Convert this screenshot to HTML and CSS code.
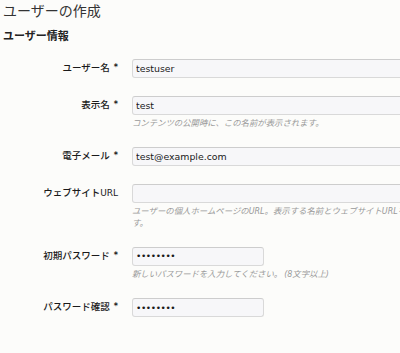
FILE: index.html
```html
<!DOCTYPE html>
<html lang="ja">
<head>
<meta charset="utf-8">
<title>ユーザーの作成</title>
<link rel="stylesheet" href="styles.css">
</head>
<body>
<div class="page">
  <h1 class="title">ユーザーの作成</h1>
  <h3 class="section">ユーザー情報</h3>
  <div class="form">
    <div class="row">
      <div class="label">ユーザー名<span class="req">*</span></div>
      <div class="field"><input class="input wide" type="text" value="testuser"></div>
    </div>
    <div class="row">
      <div class="label">表示名<span class="req">*</span></div>
      <div class="field">
        <input class="input wide" type="text" value="test">
        <p class="hint">コンテンツの公開時に、この名前が表示されます。</p>
      </div>
    </div>
    <div class="row">
      <div class="label">電子メール<span class="req">*</span></div>
      <div class="field"><input class="input wide" type="text" value="test@example.com"></div>
    </div>
    <div class="row">
      <div class="label">ウェブサイト<span class="lat">URL</span></div>
      <div class="field">
        <input class="input wide" type="text" value="">
        <p class="hint">ユーザーの個人ホームページの<span class="lat">URL</span>。表示する名前とウェブサイト<span class="lat">URL</span>を表示しま<br>す。</p>
      </div>
    </div>
    <div class="row">
      <div class="label">初期パスワード<span class="req">*</span></div>
      <div class="field">
        <input class="input short" type="password" value="testpass">
        <p class="hint">新しいパスワードを入力してください。 <span class="lat">(8</span>文字以上<span class="lat">)</span></p>
      </div>
    </div>
    <div class="row">
      <div class="label">パスワード確認<span class="req">*</span></div>
      <div class="field"><input class="input short" type="password" value="testpass"></div>
    </div>
  </div>
</div>
</body>
</html>
```
FILE: styles.css
```css
html, body {
  margin: 0;
  padding: 0;
  background: #fcfcfa;
}
body {
  width: 400px;
  height: 353px;
  overflow: hidden;
  font-family: "DejaVu Sans", "Noto Sans CJK JP", sans-serif;
  color: #222;
}
.page {
  padding-left: 3px;
}
.title {
  margin: 0;
  font-family: "Noto Sans CJK JP", sans-serif;
  font-size: 14px;
  font-weight: 400;
  line-height: 20px;
  color: #333;
}
.section {
  margin: 8px 0 8px;
  font-family: "Noto Sans CJK JP", sans-serif;
  font-size: 11px;
  font-weight: 700;
  line-height: 14px;
  color: #222;
}
.form {
  display: flex;
  flex-direction: column;
}
.row {
  display: grid;
  grid-template-columns: 115px 1fr;
  column-gap: 14px;
  padding: 9px 0;
}
.label {
  text-align: right;
  font-family: "Noto Sans CJK JP", sans-serif;
  font-size: 9.5px;
  font-weight: 500;
  line-height: 13px;
  padding-top: 2px;
  color: #1a1a1a;
  white-space: nowrap;
}
.lat {
  font-family: "DejaVu Sans", sans-serif;
}
.label .lat {
  font-size: 9px;
  font-weight: 400;
}
.req {
  margin-left: 4px;
  font-family: "DejaVu Sans", sans-serif;
  font-size: 8px;
  font-weight: 700;
  vertical-align: 1px;
}
.field {
  min-width: 0;
}
.input {
  display: block;
  box-sizing: border-box;
  height: 19px;
  margin: 0;
  padding: 0 3px;
  border: 1px solid #d9d9d9;
  border-top-color: #cdcdcd;
  border-radius: 3px;
  background: #f7f7f9;
  font-family: "DejaVu Sans", sans-serif;
  font-size: 9.4px;
  color: #1a1a1a;
  outline: none;
}
.input.wide {
  width: 300px;
}
.input.short {
  width: 132px;
  font-size: 9px;
  letter-spacing: -0.4px;
}
.hint {
  margin: 2px 0 0;
  font-family: "Noto Sans CJK JP", sans-serif;
  font-size: 8.4px;
  font-style: italic;
  line-height: 11.5px;
  color: #999;
  white-space: nowrap;
}
.hint .lat {
  font-size: 8px;
}
```
